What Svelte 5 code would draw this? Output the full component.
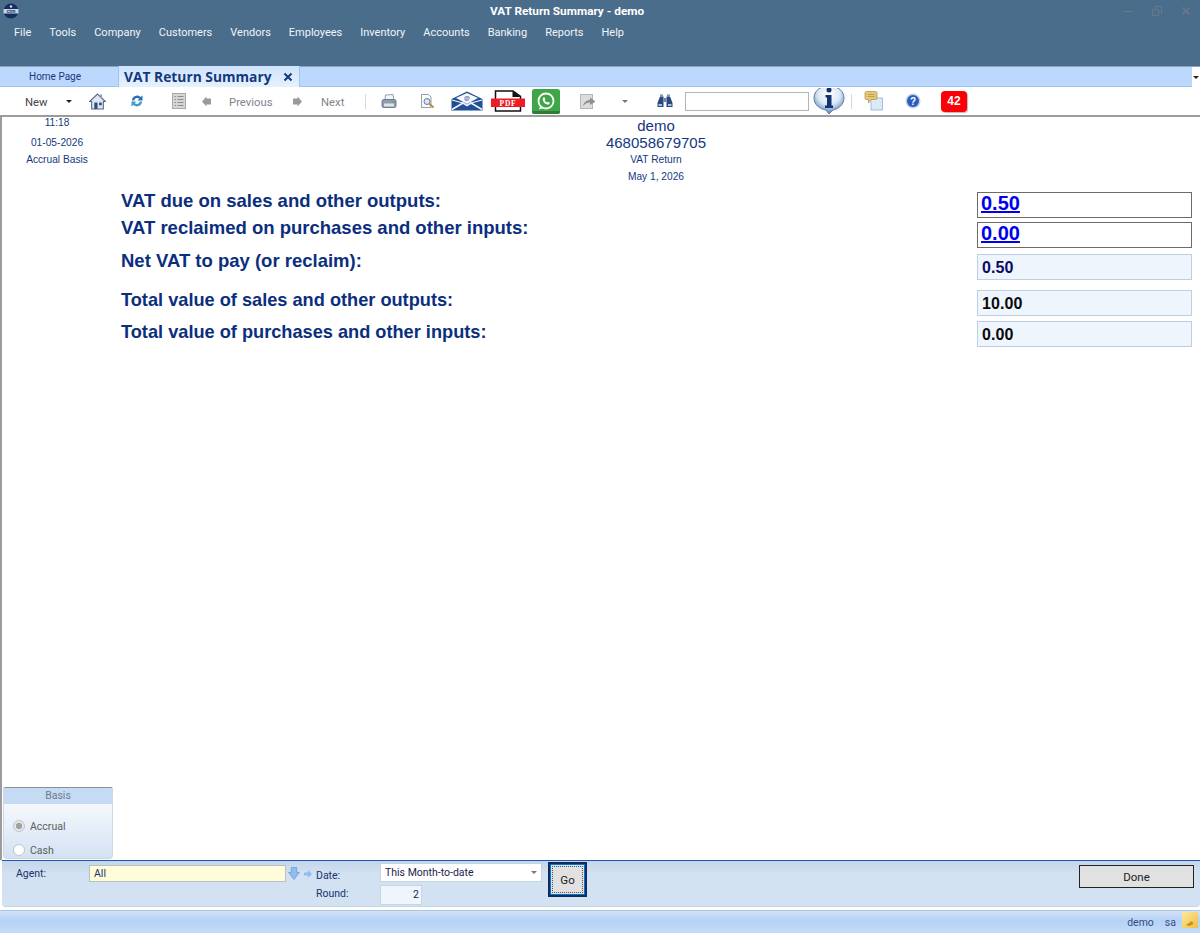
<script>
  const menus = ['File', 'Tools', 'Company', 'Customers', 'Vendors', 'Employees', 'Inventory', 'Accounts', 'Banking', 'Reports', 'Help']

  const labels = [
    { text: 'VAT due on sales and other outputs:', cls: 'l1' },
    { text: 'VAT reclaimed on purchases and other inputs:', cls: 'l2' },
    { text: 'Net VAT to pay (or reclaim):', cls: 'l3' },
    { text: 'Total value of sales and other outputs:', cls: 'l4' },
    { text: 'Total value of purchases and other inputs:', cls: 'l5' }
  ]

  let agent = 'All'
</script>

<div class="app">
  <header class="titlebar">
    <div class="titlerow">
      <svg class="logo" viewBox="0 0 16 16" width="16" height="16">
        <circle cx="8" cy="8" r="7.5" fill="#14305f" />
        <path d="M0.5 6 H15.5 V10.5 H0.5 Z" fill="#c9d6e8" />
        <text x="8" y="10" class="ctm">ctm</text>
        <circle cx="8" cy="3.5" r="1.2" fill="#dfe8f4" />
      </svg>
      <span class="apptitle">VAT Return Summary - demo</span>
      <div class="wincontrols">
        <svg viewBox="0 0 12 12" width="12" height="12"><path d="M2 6.5 H10" stroke="#66788a" stroke-width="1.5" /></svg>
        <svg viewBox="0 0 12 12" width="12" height="12"><path d="M1.5 4.5 H7.5 V10.5 H1.5 Z M4 4.5 V1.5 H10.5 V8 H7.5" fill="none" stroke="#66788a" /></svg>
        <svg viewBox="0 0 12 12" width="12" height="12"><path d="M2.5 2.5 L9.5 9.5 M9.5 2.5 L2.5 9.5" stroke="#66788a" stroke-width="1.8" /></svg>
      </div>
    </div>
    <nav class="menubar">
      {#each menus as m}
        <span>{m}</span>
      {/each}
    </nav>
  </header>

  <div class="tabstrip">
    <div class="tabs">
      <div class="tab home">Home Page</div>
      <div class="tab active">
        <span>VAT Return Summary</span>
        <svg viewBox="0 0 10 10" width="10" height="10"><path d="M1.5 1.5 L8.5 8.5 M8.5 1.5 L1.5 8.5" stroke="#14387f" stroke-width="2" /></svg>
      </div>
    </div>
    <div class="tabmenu"><i class="caret dark"></i></div>
  </div>

  <div class="toolbar">
    <span class="tool-new">New</span>
    <i class="caret dark new-caret"></i>
    <svg class="t-home" viewBox="0 0 16 16" width="17" height="17">
      <path d="M8 1 L15.5 8 L13.5 8 L13.5 15 L2.5 15 L2.5 8 L0.5 8 Z" fill="#dfe6ef" stroke="#4d6a8d" />
      <path d="M10.5 1.5 H12.3 V5.5 L10.5 4 Z" fill="#8b99ab" />
      <rect x="5" y="9" width="3" height="6" fill="#2d4c82" />
      <rect x="9.5" y="9" width="2.5" height="2.5" fill="#2d4c82" />
    </svg>
    <svg class="t-refresh" viewBox="0 0 14 14" width="14" height="14">
      <path d="M2 6.5 A5 5 0 0 1 10.5 3 L12.5 1.5 V6.5 H7.5 L9.3 4.7 A3 3 0 0 0 4.3 6.5 Z" fill="#2d6fb6" />
      <path d="M12 7.5 A5 5 0 0 1 3.5 11 L1.5 12.5 V7.5 H6.5 L4.7 9.3 A3 3 0 0 0 9.7 7.5 Z" fill="#3f9bd8" />
    </svg>
    <svg class="t-list" viewBox="0 0 14 16" width="14" height="16">
      <rect x="0.5" y="0.5" width="13" height="15" fill="#d6d6d6" stroke="#a9a9a9" />
      <path d="M2.5 3.5 H4 M5.5 3.5 H11.5 M2.5 6.5 H4 M5.5 6.5 H11.5 M2.5 9.5 H4 M5.5 9.5 H11.5 M2.5 12.5 H4 M5.5 12.5 H11.5" stroke="#8d8d8d" />
    </svg>
    <svg class="t-prev" viewBox="0 0 9 11" width="9" height="11"><path d="M0 5.5 L4.5 0.5 V2.5 H9 V8.5 H4.5 V10.5 Z" fill="#9a9a9a" /></svg>
    <span class="tool-off t-previous">Previous</span>
    <svg class="t-next" viewBox="0 0 9 11" width="9" height="11"><path d="M9 5.5 L4.5 0.5 V2.5 H0 V8.5 H4.5 V10.5 Z" fill="#9a9a9a" /></svg>
    <span class="tool-off t-nexttext">Next</span>
    <i class="sep t-sep1"></i>
    <svg class="t-print" viewBox="0 0 16 15" width="16" height="15">
      <path d="M4.5 1 L12 0.5 L13 6 H4 Z" fill="#f4f6f8" stroke="#7b8794" stroke-width="0.8" />
      <path d="M1 7 Q1 5.5 3 5.5 H13 Q15 5.5 15 7 V12 Q15 13.5 13 13.5 H3 Q1 13.5 1 12 Z" fill="#8f9db0" stroke="#5e6b7d" stroke-width="0.8" />
      <rect x="3" y="9.5" width="10" height="3" fill="#dfe4ea" />
      <rect x="11" y="7" width="2.5" height="1.5" fill="#3cbd45" />
    </svg>
    <svg class="t-preview" viewBox="0 0 15 15" width="15" height="15">
      <path d="M1.5 0.5 H8.5 L11 3 V13.5 H1.5 Z" fill="#fafbfc" stroke="#7c8590" stroke-width="0.8" />
      <circle cx="7" cy="7.5" r="3" fill="#d7e6f2" stroke="#6b7d90" />
      <path d="M9.5 10 L13.5 13.5" stroke="#c8862e" stroke-width="2" />
    </svg>
    <svg class="t-mail" viewBox="0 0 32 20" width="32" height="20">
      <path d="M0.5 8 L16 0.5 L31.5 8 V19.5 H0.5 Z" fill="#1f4f96" />
      <path d="M5 7 L16 2 L27 7 L16 13 Z" fill="#f7f9fc" />
      <text x="16" y="9" class="at">@</text>
      <path d="M1 18.5 L12 12 L16 14.5 L20 12 L31 18.5" fill="none" stroke="#f1f5fa" stroke-width="1.6" />
      <path d="M1 9 L12 12 M31 9 L20 12" stroke="#f1f5fa" stroke-width="1.2" />
    </svg>
    <svg class="t-pdf" viewBox="0 0 34 22" width="34" height="22">
      <path d="M4.5 1 H22 L29.5 6.5 V21 H4.5 Z" fill="#fff" stroke="#111" stroke-width="1.5" />
      <path d="M21.5 1 V7 H29.5 Z" fill="#111" />
      <rect x="0" y="8.5" width="34" height="8.5" fill="#ee1c25" />
      <text x="17" y="15.5" class="pdf">PDF</text>
    </svg>
    <svg class="t-wa" viewBox="0 0 28 25" width="28" height="25">
      <rect width="28" height="25" rx="2.5" fill="#3fa648" />
      <path d="M0 22 H28 V22.5 A2.5 2.5 0 0 1 25.5 25 H2.5 A2.5 2.5 0 0 1 0 22.5 Z" fill="#2c7d37" />
      <circle cx="14" cy="12" r="7.5" fill="none" stroke="#fff" stroke-width="1.8" />
      <path d="M8.5 16 L7 20.5 L11.5 19 Z" fill="#fff" />
      <path d="M11.2 8.5 C10 10 11 12.5 12.5 14 C14 15.5 16.5 16 17.5 15 L17.8 13.8 L15.8 12.8 L15 13.5 C14 13.2 13 12 12.7 11.2 L13.4 10.3 L12.5 8.3 Z" fill="#fff" />
    </svg>
    <svg class="t-fwd" viewBox="0 0 16 15" width="16" height="15">
      <rect x="0.5" y="0.5" width="12" height="14" fill="#dcdcdc" stroke="#b5b5b5" />
      <path d="M3 12 C4 8 7 6 10 6 V3.5 L15.5 7.5 L10 11 V8.5 C7 8.5 5 10 3 12 Z" fill="#8f8f8f" />
    </svg>
    <i class="caret grey t-fwdcaret"></i>
    <svg class="t-find" viewBox="0 0 16 14" width="16" height="14">
      <path d="M3 2.5 H6.5 V13 H0.5 V9 Z" fill="#274a7c" />
      <path d="M9.5 2.5 H13 L15.5 9 V13 H9.5 Z" fill="#274a7c" />
      <rect x="6.5" y="4" width="3" height="4" fill="#6f86a6" />
      <rect x="3" y="0.5" width="3" height="2.5" fill="#7a94b8" />
      <rect x="10" y="0.5" width="3" height="2.5" fill="#7a94b8" />
      <rect x="1.5" y="10" width="3.5" height="2" fill="#a8c0dd" />
      <rect x="11" y="10" width="3.5" height="2" fill="#a8c0dd" />
    </svg>
    <input class="search" type="text" />
    <svg class="t-info" viewBox="0 0 32 26" width="32" height="26">
      <defs>
        <radialGradient id="bubble" cx="0.5" cy="0.3" r="0.62">
          <stop offset="0" stop-color="#ffffff" />
          <stop offset="0.6" stop-color="#dbe8f6" />
          <stop offset="1" stop-color="#6f97c6" />
        </radialGradient>
      </defs>
      <path d="M16 -2 C25 -2 31 3 31 10 C31 17 25 21 20 22 L16 26 L13 22 C7 21 1 17 1 10 C1 3 7 -2 16 -2 Z" fill="url(#bubble)" stroke="#5f7fa6" />
      <circle cx="16" cy="2" r="2.5" fill="#13316f" />
      <path d="M12.5 7 H18.5 V17.5 H20 V20 H12 V17.5 H14 V9.5 H12.5 Z" fill="#13316f" />
    </svg>
    <i class="sep t-sep2"></i>
    <svg class="t-chat" viewBox="0 0 19 20" width="19" height="20">
      <rect x="7" y="7" width="11.5" height="12" fill="#dce9f7" stroke="#8fb0d6" stroke-width="0.8" />
      <path d="M1 2 Q1 0.5 2.5 0.5 H11.5 Q13 0.5 13 2 V7 Q13 8.5 11.5 8.5 H7 L4.5 12 V8.5 H2.5 Q1 8.5 1 7 Z" fill="#e5c777" stroke="#b5954a" stroke-width="0.8" />
      <path d="M3.5 3.5 H10.5 M3.5 5.5 H10.5" stroke="#b5954a" stroke-width="0.8" />
    </svg>
    <svg class="t-help" viewBox="0 0 16 16" width="16" height="16">
      <circle cx="8" cy="8" r="7.5" fill="#c3d1e6" />
      <circle cx="8" cy="8" r="6" fill="#2a5cbc" />
      <text x="8" y="11.5" class="qm">?</text>
    </svg>
    <span class="badge">42</span>
  </div>

  <main class="content">
    <div class="stamp">
      <span class="time">11:18</span>
      <span class="date">01-05-2026</span>
      <span class="basis">Accrual Basis</span>
    </div>
    <div class="heading">
      <span class="big">demo</span>
      <span class="big">468058679705</span>
      <span class="small first">VAT Return</span>
      <span class="small">May 1, 2026</span>
    </div>

    <div class="report">
      <div class="labels">
        {#each labels as l}
          <div class="label {l.cls}">{l.text}</div>
        {/each}
      </div>
      <div class="values">
        <div class="val link"><a href="#due">0.50</a></div>
        <div class="val link"><a href="#reclaimed">0.00</a></div>
        <div class="val calc navy net">0.50</div>
        <div class="val calc black sales">10.00</div>
        <div class="val calc black">0.00</div>
      </div>
    </div>

    <fieldset class="basisbox">
      <div class="basishead">Basis</div>
      <label class="radio"><i class="dot checked"></i>Accrual</label>
      <label class="radio cash"><i class="dot"></i>Cash</label>
    </fieldset>
  </main>

  <section class="filters">
    <div class="fcol agent">
      <span class="flabel">Agent:</span>
      <input class="agentinput" bind:value={agent} />
      <svg class="arrowdown" viewBox="0 0 11 12" width="12" height="13"><path d="M3 0.5 H8 V5 H10.5 L5.5 11.5 L0.5 5 H3 Z" fill="#8fbdf0" stroke="#5f93cf" stroke-width="0.6" /></svg>
      <svg class="arrowright" viewBox="0 0 8 8" width="8" height="8"><path d="M0 2.5 H4 V0 L8 4 L4 8 V5.5 H0 Z" fill="#8fbdf0" /></svg>
    </div>
    <div class="fcol names">
      <span class="flabel">Date:</span>
      <span class="flabel">Round:</span>
    </div>
    <div class="fcol fields">
      <div class="select">This Month-to-date<i class="caret grey"></i></div>
      <div class="round">2</div>
    </div>
    <button class="go"><span>Go</span></button>
    <button class="done">Done</button>
  </section>

  <footer class="statusbar">
    <span>demo</span>
    <span>sa</span>
    <svg viewBox="0 0 16 16" width="16" height="16">
      <defs>
        <linearGradient id="note" x1="0" y1="0" x2="1" y2="1">
          <stop offset="0" stop-color="#fbe9a0" />
          <stop offset="1" stop-color="#f0bf3f" />
        </linearGradient>
      </defs>
      <rect width="16" height="16" fill="url(#note)" />
      <path d="M4 13 L10 9 L11.5 12 L7 14 Z" fill="#c98d21" />
    </svg>
  </footer>
</div>

<style>
  :global(body) {
    margin: 0;
    background: #fff;
  }

  .app {
    width: 1200px;
    height: 933px;
    display: flex;
    flex-direction: column;
    overflow: hidden;
    font-family: "Liberation Sans", Arial, sans-serif;
    background: #fff;
  }

  .titlebar {
    height: 66px;
    flex: none;
    background: #4a6d8b;
    color: #fff;
    font-family: Roboto, sans-serif;
  }

  .titlerow {
    height: 22px;
    display: flex;
    align-items: center;
    position: relative;
    padding-left: 3px;
  }

  .apptitle {
    position: absolute;
    left: 490px;
    top: 4px;
    font-size: 11.8px;
    font-weight: 700;
    white-space: nowrap;
  }

  .wincontrols {
    margin-left: auto;
    display: flex;
    gap: 17px;
    padding-right: 8px;
  }

  .menubar {
    display: flex;
    gap: 18px;
    padding: 4px 0 0 14px;
    font-size: 11px;
    color: #f2f5f8;
  }

  .tabstrip {
    height: 21px;
    flex: none;
    display: flex;
    border-top: 1px solid #8aa4bf;
    box-sizing: border-box;
    background: #fff;
  }

  .tabs {
    flex: 1;
    display: flex;
    align-items: flex-end;
    background: #bcd9fd;
    border-bottom: 1px solid #9dc3ee;
  }

  .tab {
    height: 20px;
    box-sizing: border-box;
    display: flex;
    align-items: center;
    color: #14387f;
  }

  .home {
    width: 118px;
    padding: 1px 0 0 29px;
    font-size: 10px;
    font-family: Roboto, sans-serif;
  }

  .active {
    width: 182px;
    padding-left: 5px;
    margin-bottom: -1px;
    height: 21px;
    background: linear-gradient(#cfe4fd, #e7f1fd);
    border-left: 1px solid #9dc3ee;
    border-right: 1px solid #9dc3ee;
    font-size: 13.8px;
    font-weight: 700;
    font-family: "Open Sans", sans-serif;
    gap: 11px;
    white-space: nowrap;
  }

  .tabmenu {
    width: 8px;
    flex: none;
    background: #fff;
    display: flex;
    align-items: center;
    justify-content: center;
  }

  .caret {
    display: inline-block;
    flex: none;
    width: 0;
    height: 0;
    border-left: 3px solid transparent;
    border-right: 3px solid transparent;
    border-top: 3px solid #222;
  }

  .caret.grey {
    border-top-color: #777;
  }

  .toolbar {
    height: 28px;
    flex: none;
    display: flex;
    align-items: center;
    font-family: Roboto, sans-serif;
    font-size: 11.3px;
    color: #444;
    box-sizing: border-box;
    padding-left: 25px;
    background: #fff;
  }

  .toolbar > * { flex: none; }

  .tool-new { width: 24px; padding-top: 2px; }
  .new-caret { margin-left: 17px; }
  .t-home { margin-left: 17px; }
  .t-refresh { margin-left: 24px; }
  .t-list { margin-left: 28px; }
  .t-prev { margin-left: 16px; }
  .tool-off { color: #80848c; padding-top: 2px; }
  .t-previous { margin-left: 18px; width: 42px; }
  .t-next { margin-left: 22px; }
  .t-nexttext { margin-left: 19px; width: 23px; }
  .sep {
    width: 1px;
    height: 15px;
    background: #d5d9de;
  }
  .t-sep1 { margin-left: 21px; }
  .t-print { margin-left: 15px; }
  .t-preview { margin-left: 23px; }
  .t-mail { margin-left: 16px; }
  .t-pdf { margin-left: 8px; }
  .t-wa { margin-left: 7px; }
  .t-fwd { margin-left: 20px; }
  .t-fwdcaret { margin-left: 26px; }
  .t-find { margin-left: 29px; }
  .search {
    width: 124px;
    height: 19px;
    box-sizing: border-box;
    margin-left: 12px;
    border: 1px solid #b4b4b4;
    background: #fff;
    padding: 0;
  }
  .t-info { margin-left: 4px; margin-top: -1px; }
  .t-sep2 { margin-left: 6px; }
  .t-chat { margin-left: 12px; }
  .t-help { margin-left: 22px; }
  .badge {
    margin-left: 20px;
    width: 26px;
    height: 21px;
    border-radius: 4px;
    background: #fb0007;
    color: #fff;
    font-family: "Liberation Sans", sans-serif;
    font-weight: 700;
    font-size: 12px;
    display: flex;
    align-items: center;
    justify-content: center;
    box-shadow: 1px 1px 1px #b9b9b9;
  }

  .content {
    flex: 1;
    min-height: 0;
    box-sizing: border-box;
    border-top: 2px solid #9c9c9c;
    border-left: 2px solid #9c9c9c;
    display: flex;
    flex-direction: column;
    position: relative;
    color: #14387f;
  }

  .stamp {
    position: absolute;
    left: 0;
    top: 0;
    width: 110px;
    display: flex;
    flex-direction: column;
    align-items: center;
    font-size: 10.2px;
  }

  .time { line-height: 12px; }
  .date { margin-top: 8px; line-height: 12px; }
  .basis { margin-top: 5px; line-height: 12px; }

  .heading {
    display: flex;
    flex-direction: column;
    align-items: center;
    padding-left: 110px;
    height: 73px;
    box-sizing: border-box;
  }

  .big {
    font-size: 15px;
    line-height: 17px;
  }

  .small {
    font-size: 10.2px;
    line-height: 12px;
    margin-top: 5px;
  }

  .small.first { margin-top: 3px; }

  .report {
    display: flex;
    justify-content: space-between;
    padding: 0 8px 0 119px;
  }

  .labels {
    display: flex;
    flex-direction: column;
    font-size: 18.5px;
    font-weight: 700;
    line-height: 22px;
    color: #0b2f7e;
  }

  .l2 { margin-top: 5px; }
  .l3 { margin-top: 11px; }
  .l4 { margin-top: 17px; font-size: 18.2px; }
  .l5 { margin-top: 10px; font-size: 18.2px; }

  .values {
    display: flex;
    flex-direction: column;
    width: 215px;
    margin-top: 2px;
  }

  .val {
    height: 26px;
    box-sizing: border-box;
    border: 1px solid #6b6b6b;
    display: flex;
    align-items: center;
    padding-left: 3px;
    font-weight: 700;
    background: #fff;
  }

  .link { padding-bottom: 4px; }
  .link + .link { margin-top: 4px; }

  .link a {
    color: #0000f0;
    font-size: 20px;
    text-decoration: underline;
    line-height: 22px;
  }

  .calc {
    margin-top: 5px;
    border-color: #bdcfe4;
    background: #eef5fd;
    font-size: 16px;
    padding: 1px 0 0 4px;
    letter-spacing: 0.1px;
  }

  .net { margin-top: 6px; }
  .sales { margin-top: 10px; }
  .navy { color: #0a0a66; }
  .black { color: #0a0a0a; }

  .basisbox {
    margin: auto 0 1px 1px;
    padding: 0;
    width: 110px;
    height: 72px;
    box-sizing: border-box;
    border: 1px solid #ccd8e6;
    border-top: 1px solid #8a8f96;
    border-radius: 2px 2px 4px 4px;
    background: linear-gradient(#fff, #d3e2f3);
    color: #555;
    font-size: 10.5px;
  }

  .basishead {
    height: 16px;
    background: #c5daf3;
    text-align: center;
    color: #6d7c8d;
    line-height: 16px;
    font-family: Roboto, sans-serif;
  }

  .radio {
    display: flex;
    align-items: center;
    gap: 5px;
    margin: 15px 0 0 9px;
    height: 14px;
    font-family: Roboto, sans-serif;
    color: #5d5d5d;
  }

  .cash { margin-top: 10px; }

  .dot {
    width: 12px;
    height: 12px;
    box-sizing: border-box;
    border: 1px solid #bcc5cf;
    border-radius: 50%;
    background: #fff;
  }

  .dot.checked {
    background: radial-gradient(circle, #a3a3a3 0 3px, #e6e6e6 3.5px);
  }

  .filters {
    height: 47px;
    flex: none;
    box-sizing: border-box;
    margin-left: 2px;
    border-top: 1px solid #1f57b5;
    border-bottom: 1px solid #c6d5e6;
    border-radius: 0 0 4px 4px;
    background: linear-gradient(#c4d6ea, #d3e2f2 30%);
    display: flex;
    font-family: Roboto, sans-serif;
    font-size: 10.5px;
    color: #16346f;
    position: relative;
  }

  .fcol {
    display: flex;
  }

  .agent {
    align-items: flex-start;
    padding: 4px 0 0 14px;
    width: 314px;
    box-sizing: border-box;
  }

  .agent .flabel {
    width: 73px;
    line-height: 17px;
  }

  .agentinput {
    width: 197px;
    height: 17px;
    box-sizing: border-box;
    border: 1px solid #b9c0c6;
    background: #fffcd9;
    font: inherit;
    color: #16346f;
    padding: 0 4px;
    outline: none;
  }

  .arrowdown { margin: 2px 0 0 2px; }
  .arrowright { margin: 5px 0 0 4px; }

  .names {
    flex-direction: column;
    width: 64px;
    padding-top: 7px;
    box-sizing: border-box;
    line-height: 15px;
    gap: 3px;
  }

  .fields {
    flex-direction: column;
    padding-top: 2px;
    gap: 3px;
  }

  .select {
    width: 162px;
    height: 19px;
    box-sizing: border-box;
    background: #fff;
    border: 1px solid #c6d5e6;
    display: flex;
    align-items: center;
    justify-content: space-between;
    padding: 0 4px;
    color: #22224f;
  }

  .round {
    width: 42px;
    height: 20px;
    box-sizing: border-box;
    background: #eef5fd;
    border: 1px solid #c6d5e6;
    text-align: right;
    line-height: 18px;
    padding-right: 2px;
    color: #22224f;
  }

  .go {
    position: absolute;
    left: 546px;
    top: 1px;
    width: 39px;
    height: 35px;
    box-sizing: border-box;
    padding: 2px;
    border: 2px solid #0f2d58;
    outline: 1px solid #0078d7;
    outline-offset: -3px;
    background: #e1e1e1;
    font: inherit;
    font-size: 11.5px;
    color: #222;
  }

  .go span {
    display: flex;
    align-items: center;
    justify-content: center;
    height: 100%;
    border: 1px dotted #555;
    box-sizing: border-box;
  }

  .done {
    position: absolute;
    right: 6px;
    top: 4px;
    width: 115px;
    height: 23px;
    box-sizing: border-box;
    border: 1px solid #222;
    background: #e1e1e1;
    font: inherit;
    font-size: 11.5px;
    color: #222;
  }

  .statusbar {
    height: 23px;
    margin-top: 3px;
    flex: none;
    box-sizing: border-box;
    border-top: 1px solid #a8c6e8;
    background: linear-gradient(#d2e2f6, #b4d2f6 45%, #c5dcf8);
    display: flex;
    align-items: center;
    justify-content: flex-end;
    gap: 11px;
    padding-right: 2px;
    font-family: Roboto, sans-serif;
    font-size: 10.5px;
    color: #3c4a86;
  }

  .statusbar svg { margin-left: -5px; margin-top: -4px; }

  .ctm {
    font: 700 5px "Liberation Sans", sans-serif;
    fill: #14305f;
    text-anchor: middle;
  }

  .at {
    font: 700 6px "Liberation Sans", sans-serif;
    fill: #1f4f96;
    text-anchor: middle;
  }

  .pdf {
    font: 700 7.5px "Liberation Serif", serif;
    fill: #fff;
    text-anchor: middle;
    letter-spacing: 0.8px;
  }

  .qm {
    font: 700 10px "Liberation Sans", sans-serif;
    fill: #fff;
    text-anchor: middle;
  }
</style>
